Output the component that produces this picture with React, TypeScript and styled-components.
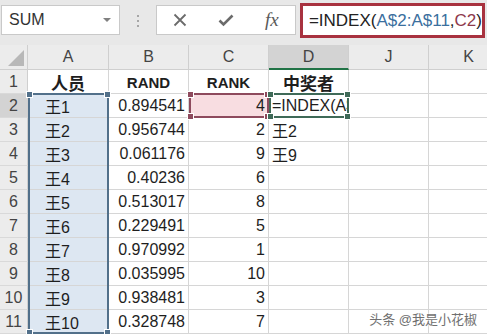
import React from 'react'
import styled, { createGlobalStyle } from 'styled-components'

const FONT = `"Liberation Sans", "Noto Sans CJK SC", sans-serif`

// Sheet data
const names = ['王1', '王2', '王3', '王4', '王5', '王6', '王7', '王8', '王9', '王10']
const rands = ['0.894541', '0.956744', '0.061176', '0.40236', '0.513017', '0.229491', '0.970992', '0.035995', '0.938481', '0.328748']
const ranks = ['4', '2', '9', '6', '8', '5', '1', '10', '3', '7']
const winners = ['=INDEX(A$2:A$11,C2)', '王2', '王9']
const columns = ['A', 'B', 'C', 'D', 'J', 'K']

type Align = 'left' | 'center' | 'right'

export default function App(): JSX.Element {
  const rows = Array.from({ length: 11 }, (_, i) => i + 1)

  return (
    <>
      <GlobalStyle />
      <Toolbar>
        <NameBox>
          SUM
          <DropArrow />
        </NameBox>
        <Grip>
          <Dot />
          <Dot />
          <Dot />
        </Grip>
        <ButtonBox>
          <ToolButton>
            <svg width='16' height='16' viewBox='0 0 16 16'>
              <path d='M2.5 2.5 L13.5 13.5 M13.5 2.5 L2.5 13.5' stroke='#6b6b6b' strokeWidth='1.8' fill='none' />
            </svg>
          </ToolButton>
          <ToolButton>
            <svg width='18' height='16' viewBox='0 0 18 16'>
              <path d='M2.5 8.5 L6.5 12.5 L15.5 3.5' stroke='#6b6b6b' strokeWidth='2.6' fill='none' />
            </svg>
          </ToolButton>
          <ToolButton>
            <FxLabel>fx</FxLabel>
          </ToolButton>
        </ButtonBox>
        <FormulaBox>
          =INDEX(<RefA>A$2:A$11</RefA>,<RefC>C2</RefC>)
        </FormulaBox>
      </Toolbar>

      <SheetWrap>
        <Sheet>
          <Corner $r={1} $c={1}>
            <CornerMark />
          </Corner>
          {columns.map((col, i) => (
            <ColHeader key={`col-${col}`} $r={1} $c={i + 2} $active={col === 'D'}>
              {col}
            </ColHeader>
          ))}

          {rows.map(row => (
            <RowHeader key={`row-${row}`} $r={row + 1} $c={1} $active={row === 2}>
              {row}
            </RowHeader>
          ))}

          {/* header row */}
          <Cell $r={2} $c={2} $align='center' $bold $size={17}>人员</Cell>
          <Cell $r={2} $c={3} $align='center' $bold $size={15}>RAND</Cell>
          <Cell $r={2} $c={4} $align='center' $bold $size={15}>RANK</Cell>
          <Cell $r={2} $c={5} $align='center' $bold $size={17}>中奖者</Cell>
          <Cell $r={2} $c={6} />
          <Cell $r={2} $c={7} />

          {names.map((name, i) => (
            <React.Fragment key={`data-${name}`}>
              <Cell $r={i + 3} $c={2} $indent={17} $fill='#dde7f2'>{name}</Cell>
              <Cell $r={i + 3} $c={3} $align='right'>{rands[i]}</Cell>
              <Cell $r={i + 3} $c={4} $align='right' $fill={i === 0 ? '#f8dde1' : undefined}>
                {ranks[i]}
              </Cell>
              <Cell $r={i + 3} $c={5}>{winners[i] ?? ''}</Cell>
              <Cell $r={i + 3} $c={6} />
              <Cell $r={i + 3} $c={7} />
            </React.Fragment>
          ))}

          {/* range highlights */}
          <Selection $r='3 / 13' $c='2' $color='#52708a'>
            <Handle $pos='tl' $color='#52708a' />
            <Handle $pos='tr' $color='#52708a' />
            <Handle $pos='bl' $color='#52708a' />
            <Handle $pos='br' $color='#52708a' />
          </Selection>
          <Selection $r='3' $c='4' $color='#8e4a5d'>
            <Handle $pos='tl' $color='#8e4a5d' />
            <Handle $pos='tr' $color='#8e4a5d' />
            <Handle $pos='bl' $color='#8e4a5d' />
            <Handle $pos='br' $color='#8e4a5d' />
          </Selection>
          <Selection $r='3' $c='5' $color='#3f6a58'>
            <Handle $pos='tl' $color='#3f6a58' />
            <Handle $pos='tr' $color='#3f6a58' />
            <Handle $pos='bl' $color='#3f6a58' />
            <Handle $pos='br' $color='#3f6a58' />
          </Selection>
        </Sheet>
        <Watermark>头条 @我是小花椒</Watermark>
      </SheetWrap>
    </>
  )
}

// Styled components
const GlobalStyle = createGlobalStyle`
  body {
    margin: 0;
    background: #ffffff;
    overflow: hidden;
    font-family: ${FONT};
  }
`
const Toolbar = styled.div`
  height: 45px;
  display: flex;
  align-items: flex-start;
  background: #e8e8e8;
  padding: 4px 2px 0 1px;
  box-sizing: border-box;
`
const NameBox = styled.div`
  width: 126px;
  height: 30px;
  margin-top: 1px;
  box-sizing: border-box;
  background: #fff;
  border: 1px solid #c9c9c9;
  display: flex;
  align-items: center;
  justify-content: space-between;
  padding: 0 8px 0 7px;
  font-size: 16px;
  color: #333;
`
const DropArrow = styled.span`
  width: 0;
  height: 0;
  border-left: 4px solid transparent;
  border-right: 4px solid transparent;
  border-top: 4px solid #808080;
`
const Grip = styled.div`
  width: 38px;
  display: flex;
  flex-direction: column;
  align-items: center;
  gap: 3px;
  margin-top: 11px;
`
const Dot = styled.span`
  width: 2px;
  height: 2px;
  background: #a6a6a6;
`
const ButtonBox = styled.div`
  width: 140px;
  height: 30px;
  margin-top: 1px;
  box-sizing: border-box;
  background: #fff;
  border: 1px solid #c9c9c9;
  display: flex;
  align-items: center;
`
const ToolButton = styled.div`
  width: 46px;
  display: flex;
  justify-content: center;
  align-items: center;
`
const FxLabel = styled.span`
  font-family: "Liberation Serif", serif;
  font-style: italic;
  font-size: 19px;
  color: #5a5a5a;
`
const FormulaBox = styled.div`
  flex: 1;
  height: 35px;
  margin: -1px 0 0 4px;
  box-sizing: border-box;
  background: #fff;
  border: 3px solid #a8323f;
  display: flex;
  align-items: center;
  padding-left: 6px;
  font-size: 17px;
  color: #222;
  white-space: nowrap;
`
const RefA = styled.span`
  color: #3a6f9e;
`
const RefC = styled.span`
  color: #8e3a4d;
`
const SheetWrap = styled.div`
  position: relative;
`
const Sheet = styled.div`
  display: grid;
  grid-template-columns: 28px 81px 80px 80px 80px 80px 80px;
  grid-template-rows: 25px repeat(11, 24px);
  font-size: 16px;
  color: #1e1e1e;
`
const Placed = styled.div<{ $r: number | string; $c: number | string }>`
  grid-row: ${p => p.$r};
  grid-column: ${p => p.$c};
  box-sizing: border-box;
  min-width: 0;
`
const Corner = styled(Placed)`
  background: #ececec;
  border-right: 1px solid #cfcfcf;
  border-bottom: 1px solid #cfcfcf;
  display: flex;
  align-items: flex-end;
  justify-content: flex-end;
  padding: 0 3px 3px 0;
`
const CornerMark = styled.span`
  width: 0;
  height: 0;
  border-left: 16px solid transparent;
  border-bottom: 16px solid #b8b8b8;
`
const ColHeader = styled(Placed)<{ $active?: boolean }>`
  background: ${p => (p.$active ? '#d3d3d3' : '#ececec')};
  border-right: 1px solid #cfcfcf;
  border-bottom: ${p => (p.$active ? '2px solid #217346' : '1px solid #cfcfcf')};
  display: flex;
  align-items: center;
  justify-content: center;
  color: #444;
  font-size: 16px;
`
const RowHeader = styled(Placed)<{ $active?: boolean }>`
  background: ${p => (p.$active ? '#d3d3d3' : '#ececec')};
  border-right: 1px solid #cfcfcf;
  border-bottom: 1px solid #d9d9d9;
  display: flex;
  align-items: center;
  justify-content: center;
  color: #444;
  font-size: 16px;
`
const Cell = styled(Placed)<{ $align?: Align; $bold?: boolean; $fill?: string; $size?: number; $indent?: number }>`
  background: ${p => p.$fill ?? '#fff'};
  border-right: 1px solid #d6d6d6;
  border-bottom: 1px solid #d6d6d6;
  display: flex;
  align-items: center;
  justify-content: ${p => (p.$align === 'right' ? 'flex-end' : p.$align === 'center' ? 'center' : 'flex-start')};
  padding: 1px 3px 0 ${p => p.$indent ?? 3}px;
  font-size: ${p => p.$size ?? 16}px;
  font-weight: ${p => (p.$bold ? 700 : 400)};
  white-space: nowrap;
  overflow: hidden;
`
const Selection = styled(Placed)<{ $color: string }>`
  position: relative;
  z-index: 2;
  border: 2px solid ${p => p.$color};
  margin-top: -1px;
  pointer-events: none;
`
const Handle = styled.span<{ $pos: 'tl' | 'tr' | 'bl' | 'br'; $color: string }>`
  position: absolute;
  width: 5px;
  height: 5px;
  background: ${p => p.$color};
  border: 1px solid #fff;
  ${p => (p.$pos[0] === 't' ? 'top: -4px;' : 'bottom: -4px;')}
  ${p => (p.$pos[1] === 'l' ? 'left: -4px;' : 'right: -4px;')}
`
const Watermark = styled.div`
  position: absolute;
  right: 10px;
  bottom: 6px;
  font-size: 13px;
  color: #707070;
  text-shadow: 0 0 2px #fff, 0 0 2px #fff;
  white-space: nowrap;
`
